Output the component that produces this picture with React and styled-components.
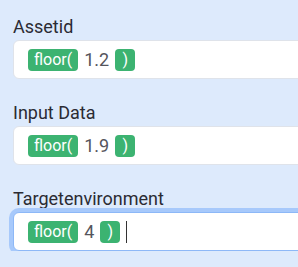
import React from "react";
import styled, { createGlobalStyle } from "styled-components";

const Global = createGlobalStyle`
  html, body { margin: 0; padding: 0; background: #ddeafc; overflow: hidden; }
  body { font-family: Roboto, "Liberation Sans", sans-serif; }
`;

const Page = styled.div`
  display: flex;
  flex-direction: column;
  gap: 23px;
  padding: 16px 0 0 13px;
  width: 340px;
`;

const Field = styled.div`
  display: flex;
  flex-direction: column;
  gap: 3px;
`;

const Label = styled.div`
  font-size: 18px;
  line-height: 21px;
  color: #2b2b33;
`;

const Input = styled.div`
  box-sizing: border-box;
  height: 39px;
  display: flex;
  align-items: center;
  gap: 6px;
  padding: 0 14px;
  background: #fff;
  border: 1px solid ${(p) => (p.$focused ? "#8db8f7" : "#dfe3ea")};
  border-radius: 6px;
  box-shadow: ${(p) => (p.$focused ? "0 0 0 4px #a7c9fb" : "none")};
`;

const Chip = styled.span`
  display: inline-flex;
  align-items: center;
  justify-content: center;
  height: 22px;
  min-width: 20px;
  box-sizing: border-box;
  padding: 0 6px;
  border-radius: 4px;
  background: #3cb371;
  color: #fff;
  font-size: 16px;
`;

const Value = styled.span`
  font-size: 18px;
  color: #55555c;
`;

const Caret = styled.span`
  width: 1px;
  height: 22px;
  background: #333;
`;

const fields = [
  { label: "Assetid", value: "1.2" },
  { label: "Input Data", value: "1.9" },
  { label: "Targetenvironment", value: "4", focused: true },
];

export default function App() {
  return (
    <>
      <Global />
      <Page>
        {fields.map((f) => (
          <Field key={f.label}>
            <Label>{f.label}</Label>
            <Input $focused={f.focused}>
              <Chip>floor(</Chip>
              <Value>{f.value}</Value>
              <Chip>)</Chip>
              {f.focused && <Caret />}
            </Input>
          </Field>
        ))}
      </Page>
    </>
  );
}
